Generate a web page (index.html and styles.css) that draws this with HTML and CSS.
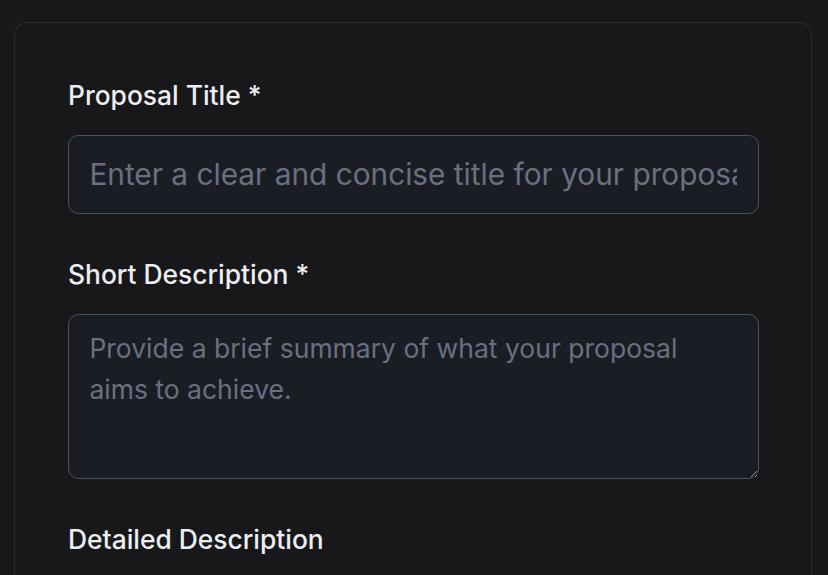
FILE: index.html
```html
<!DOCTYPE html>
<html lang="en">
<head>
<meta charset="utf-8">
<title>Proposal form</title>
<link rel="stylesheet" href="styles.css">
</head>
<body>
<div class="card">
  <div class="field">
    <label class="label" for="title">Proposal Title *</label>
    <input id="title" class="input" type="text" placeholder="Enter a clear and concise title for your proposal">
  </div>
  <div class="field">
    <label class="label" for="short">Short Description *</label>
    <textarea id="short" class="textarea" placeholder="Provide a brief summary of what your proposal aims to achieve."></textarea>
  </div>
  <div class="field">
    <label class="label" for="detail">Detailed Description</label>
  </div>
</div>
</body>
</html>
```
FILE: styles.css
```css
html, body {
  margin: 0;
  padding: 0;
  background: #18181b;
  color-scheme: dark;
}
body {
  font-family: Inter, "Noto Sans", "Liberation Sans", sans-serif;
  overflow: hidden;
  height: 575px;
}
.card {
  margin: 21.5px 16px 0 13.5px;
  padding: 52px 52.5px 40px 53.5px;
  border: 1.7px solid #2a2d35;
  border-radius: 13.6px;
  background: #18181b;
}
.field {
  margin-bottom: 39.8px;
}
.label {
  display: block;
  font-size: 26.4px;
  line-height: 40.8px;
  font-weight: 500;
  color: #eceef2;
  margin-bottom: 19.5px;
}
.input, .textarea {
  display: block;
  box-sizing: border-box;
  width: 100%;
  margin: 0;
  border: 1.7px solid #4b5160;
  border-radius: 10.2px;
  background: #1b1d24;
  color: #e5e7eb;
  font-family: inherit;
  outline: none;
}
.input {
  height: 79px;
  padding: 13.6px 20.4px;
  font-size: 29.8px;
  line-height: 47.6px;
}
.textarea {
  height: 165px;
  padding: 13.6px 20.4px;
  font-size: 26.5px;
  line-height: 40.8px;
  resize: vertical;
}
.input::placeholder, .textarea::placeholder {
  color: #6b7080;
  opacity: 1;
}
```
